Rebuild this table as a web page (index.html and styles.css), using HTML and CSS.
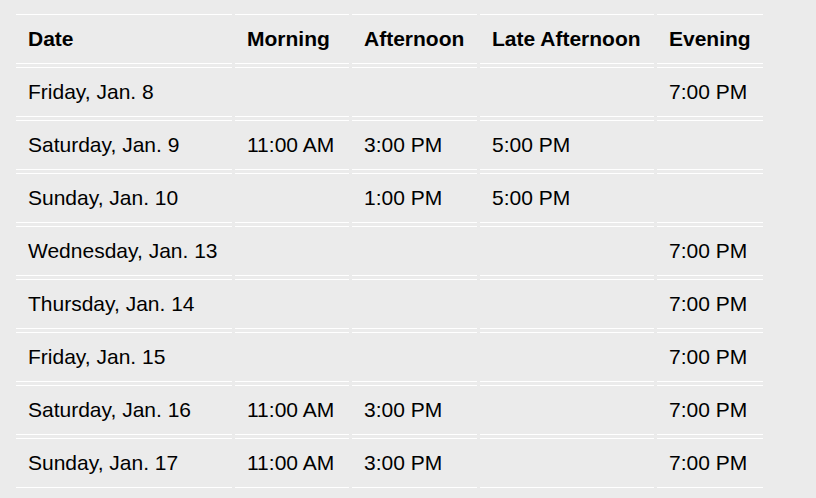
FILE: index.html
```html
<!DOCTYPE html>
<html lang="en">
<head>
<meta charset="utf-8">
<title>Schedule</title>
<link rel="stylesheet" href="styles.css">
</head>
<body>
<table class="schedule">
  <thead>
    <tr>
      <th class="col-date">Date</th>
      <th class="col-morning">Morning</th>
      <th class="col-afternoon">Afternoon</th>
      <th class="col-late">Late Afternoon</th>
      <th class="col-evening">Evening</th>
    </tr>
  </thead>
  <tbody>
    <tr><td>Friday, Jan. 8</td><td></td><td></td><td></td><td>7:00 PM</td></tr>
    <tr><td>Saturday, Jan. 9</td><td>11:00 AM</td><td>3:00 PM</td><td>5:00 PM</td><td></td></tr>
    <tr><td>Sunday, Jan. 10</td><td></td><td>1:00 PM</td><td>5:00 PM</td><td></td></tr>
    <tr><td>Wednesday, Jan. 13</td><td></td><td></td><td></td><td>7:00 PM</td></tr>
    <tr><td>Thursday, Jan. 14</td><td></td><td></td><td></td><td>7:00 PM</td></tr>
    <tr><td>Friday, Jan. 15</td><td></td><td></td><td></td><td>7:00 PM</td></tr>
    <tr><td>Saturday, Jan. 16</td><td>11:00 AM</td><td>3:00 PM</td><td></td><td>7:00 PM</td></tr>
    <tr><td>Sunday, Jan. 17</td><td>11:00 AM</td><td>3:00 PM</td><td></td><td>7:00 PM</td></tr>
  </tbody>
</table>
</body>
</html>
```

FILE: styles.css
```css
html, body {
  background: #ebebeb;
}
body {
  margin: 0;
  padding: 11px 13px;
  font-family: "Liberation Sans", Arial, sans-serif;
  font-size: 21px;
  color: #000;
}
.schedule {
  border-collapse: separate;
  border-spacing: 3px;
}
.schedule th,
.schedule td {
  border-top: 1px solid #fff;
  border-bottom: 1px solid #fff;
  padding: 12px 12px;
  line-height: 24px;
  text-align: left;
  white-space: nowrap;
}
.schedule th {
  font-weight: bold;
}
.schedule td {
  font-weight: normal;
}
.col-date { width: 192px; }
.col-morning { width: 90px; }
.col-afternoon { width: 101px; }
.col-late { width: 150px; }
.col-evening { width: 82px; }
```
